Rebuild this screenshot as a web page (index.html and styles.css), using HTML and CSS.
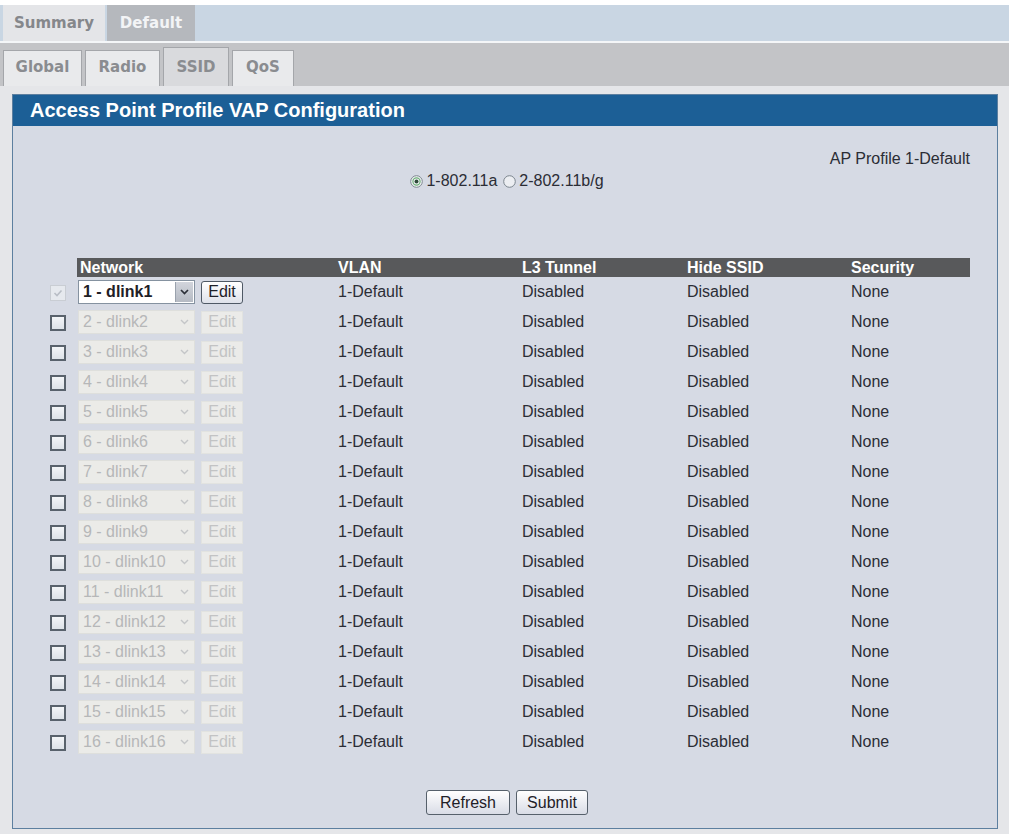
FILE: index.html
```html
<!DOCTYPE html>
<html lang="en">
<head>
    <meta charset="UTF-8">
    <meta name="viewport" content="width=device-width, initial-scale=1.0">
    <title>Access Point Profile VAP Configuration</title>
    <link rel="stylesheet" href="styles.css">
</head>
<body>
    <div class="tabs-top">
        <div class="tab tab-summary">Summary</div>
        <div class="tab tab-default">Default</div>
    </div>
    <div class="tabs-sub">
        <div class="subtab t-global">Global</div>
        <div class="subtab t-radio">Radio</div>
        <div class="subtab t-ssid active">SSID</div>
        <div class="subtab t-qos">QoS</div>
    </div>

    <div class="content">
        <div class="panel">
            <div class="panel-title">Access Point Profile VAP Configuration</div>
            <div class="panel-body">
                <div class="profile">AP Profile 1-Default</div>
                <div class="radios">
                    <label class="radio">
                        <svg width="13" height="13" viewBox="0 0 13 13"><circle cx="6.5" cy="6.5" r="5.8" fill="#f2f4f6" stroke="#7c858e"/><circle cx="6.5" cy="6.5" r="3.6" fill="none" stroke="#6fb07a" stroke-width="1.2"/><circle cx="6.5" cy="6.5" r="2" fill="#2f4a3a"/></svg>
                        1-802.11a
                    </label>
                    <label class="radio">
                        <svg width="13" height="13" viewBox="0 0 13 13"><circle cx="6.5" cy="6.5" r="5.8" fill="#eceef2" stroke="#7c858e"/></svg>
                        2-802.11b/g
                    </label>
                </div>

                <table class="vap">
                    <colgroup>
                        <col class="c-check">
                        <col class="c-net">
                        <col class="c-vlan">
                        <col class="c-l3">
                        <col class="c-hide">
                        <col>
                    </colgroup>
                    <thead>
                        <tr>
                            <th class="blank"></th>
                            <th>Network</th>
                            <th>VLAN</th>
                            <th>L3 Tunnel</th>
                            <th>Hide SSID</th>
                            <th>Security</th>
                        </tr>
                    </thead>
                    <tbody>
                        <tr>
                            <td><span class="check checked"><svg width="10" height="8" viewBox="0 0 10 8"><polyline points="1.5,4 4,6.5 8.5,1.5" fill="none" stroke="#b9bec6" stroke-width="1.6"/></svg></span></td>
                            <td class="net"><span class="select"><span class="select-text">1 - dlink1</span><span class="arrow"><svg width="9" height="6" viewBox="0 0 9 6"><polyline points="1,1 4.5,4.5 8,1" fill="none" stroke="#2c3038" stroke-width="1.7"/></svg></span></span><span class="edit">Edit</span></td>
                            <td>1-Default</td><td>Disabled</td><td>Disabled</td><td>None</td>
                        </tr>
                        <tr>
                            <td><span class="check"></span></td>
                            <td class="net"><span class="select off"><span class="select-text">2 - dlink2</span><span class="arrow"><svg width="9" height="6" viewBox="0 0 9 6"><polyline points="1,1 4.5,4.5 8,1" fill="none" stroke="#c4c6c8" stroke-width="1.4"/></svg></span></span><span class="edit off">Edit</span></td>
                            <td>1-Default</td><td>Disabled</td><td>Disabled</td><td>None</td>
                        </tr>
                        <tr>
                            <td><span class="check"></span></td>
                            <td class="net"><span class="select off"><span class="select-text">3 - dlink3</span><span class="arrow"><svg width="9" height="6" viewBox="0 0 9 6"><polyline points="1,1 4.5,4.5 8,1" fill="none" stroke="#c4c6c8" stroke-width="1.4"/></svg></span></span><span class="edit off">Edit</span></td>
                            <td>1-Default</td><td>Disabled</td><td>Disabled</td><td>None</td>
                        </tr>
                        <tr>
                            <td><span class="check"></span></td>
                            <td class="net"><span class="select off"><span class="select-text">4 - dlink4</span><span class="arrow"><svg width="9" height="6" viewBox="0 0 9 6"><polyline points="1,1 4.5,4.5 8,1" fill="none" stroke="#c4c6c8" stroke-width="1.4"/></svg></span></span><span class="edit off">Edit</span></td>
                            <td>1-Default</td><td>Disabled</td><td>Disabled</td><td>None</td>
                        </tr>
                        <tr>
                            <td><span class="check"></span></td>
                            <td class="net"><span class="select off"><span class="select-text">5 - dlink5</span><span class="arrow"><svg width="9" height="6" viewBox="0 0 9 6"><polyline points="1,1 4.5,4.5 8,1" fill="none" stroke="#c4c6c8" stroke-width="1.4"/></svg></span></span><span class="edit off">Edit</span></td>
                            <td>1-Default</td><td>Disabled</td><td>Disabled</td><td>None</td>
                        </tr>
                        <tr>
                            <td><span class="check"></span></td>
                            <td class="net"><span class="select off"><span class="select-text">6 - dlink6</span><span class="arrow"><svg width="9" height="6" viewBox="0 0 9 6"><polyline points="1,1 4.5,4.5 8,1" fill="none" stroke="#c4c6c8" stroke-width="1.4"/></svg></span></span><span class="edit off">Edit</span></td>
                            <td>1-Default</td><td>Disabled</td><td>Disabled</td><td>None</td>
                        </tr>
                        <tr>
                            <td><span class="check"></span></td>
                            <td class="net"><span class="select off"><span class="select-text">7 - dlink7</span><span class="arrow"><svg width="9" height="6" viewBox="0 0 9 6"><polyline points="1,1 4.5,4.5 8,1" fill="none" stroke="#c4c6c8" stroke-width="1.4"/></svg></span></span><span class="edit off">Edit</span></td>
                            <td>1-Default</td><td>Disabled</td><td>Disabled</td><td>None</td>
                        </tr>
                        <tr>
                            <td><span class="check"></span></td>
                            <td class="net"><span class="select off"><span class="select-text">8 - dlink8</span><span class="arrow"><svg width="9" height="6" viewBox="0 0 9 6"><polyline points="1,1 4.5,4.5 8,1" fill="none" stroke="#c4c6c8" stroke-width="1.4"/></svg></span></span><span class="edit off">Edit</span></td>
                            <td>1-Default</td><td>Disabled</td><td>Disabled</td><td>None</td>
                        </tr>
                        <tr>
                            <td><span class="check"></span></td>
                            <td class="net"><span class="select off"><span class="select-text">9 - dlink9</span><span class="arrow"><svg width="9" height="6" viewBox="0 0 9 6"><polyline points="1,1 4.5,4.5 8,1" fill="none" stroke="#c4c6c8" stroke-width="1.4"/></svg></span></span><span class="edit off">Edit</span></td>
                            <td>1-Default</td><td>Disabled</td><td>Disabled</td><td>None</td>
                        </tr>
                        <tr>
                            <td><span class="check"></span></td>
                            <td class="net"><span class="select off"><span class="select-text">10 - dlink10</span><span class="arrow"><svg width="9" height="6" viewBox="0 0 9 6"><polyline points="1,1 4.5,4.5 8,1" fill="none" stroke="#c4c6c8" stroke-width="1.4"/></svg></span></span><span class="edit off">Edit</span></td>
                            <td>1-Default</td><td>Disabled</td><td>Disabled</td><td>None</td>
                        </tr>
                        <tr>
                            <td><span class="check"></span></td>
                            <td class="net"><span class="select off"><span class="select-text">11 - dlink11</span><span class="arrow"><svg width="9" height="6" viewBox="0 0 9 6"><polyline points="1,1 4.5,4.5 8,1" fill="none" stroke="#c4c6c8" stroke-width="1.4"/></svg></span></span><span class="edit off">Edit</span></td>
                            <td>1-Default</td><td>Disabled</td><td>Disabled</td><td>None</td>
                        </tr>
                        <tr>
                            <td><span class="check"></span></td>
                            <td class="net"><span class="select off"><span class="select-text">12 - dlink12</span><span class="arrow"><svg width="9" height="6" viewBox="0 0 9 6"><polyline points="1,1 4.5,4.5 8,1" fill="none" stroke="#c4c6c8" stroke-width="1.4"/></svg></span></span><span class="edit off">Edit</span></td>
                            <td>1-Default</td><td>Disabled</td><td>Disabled</td><td>None</td>
                        </tr>
                        <tr>
                            <td><span class="check"></span></td>
                            <td class="net"><span class="select off"><span class="select-text">13 - dlink13</span><span class="arrow"><svg width="9" height="6" viewBox="0 0 9 6"><polyline points="1,1 4.5,4.5 8,1" fill="none" stroke="#c4c6c8" stroke-width="1.4"/></svg></span></span><span class="edit off">Edit</span></td>
                            <td>1-Default</td><td>Disabled</td><td>Disabled</td><td>None</td>
                        </tr>
                        <tr>
                            <td><span class="check"></span></td>
                            <td class="net"><span class="select off"><span class="select-text">14 - dlink14</span><span class="arrow"><svg width="9" height="6" viewBox="0 0 9 6"><polyline points="1,1 4.5,4.5 8,1" fill="none" stroke="#c4c6c8" stroke-width="1.4"/></svg></span></span><span class="edit off">Edit</span></td>
                            <td>1-Default</td><td>Disabled</td><td>Disabled</td><td>None</td>
                        </tr>
                        <tr>
                            <td><span class="check"></span></td>
                            <td class="net"><span class="select off"><span class="select-text">15 - dlink15</span><span class="arrow"><svg width="9" height="6" viewBox="0 0 9 6"><polyline points="1,1 4.5,4.5 8,1" fill="none" stroke="#c4c6c8" stroke-width="1.4"/></svg></span></span><span class="edit off">Edit</span></td>
                            <td>1-Default</td><td>Disabled</td><td>Disabled</td><td>None</td>
                        </tr>
                        <tr>
                            <td><span class="check"></span></td>
                            <td class="net"><span class="select off"><span class="select-text">16 - dlink16</span><span class="arrow"><svg width="9" height="6" viewBox="0 0 9 6"><polyline points="1,1 4.5,4.5 8,1" fill="none" stroke="#c4c6c8" stroke-width="1.4"/></svg></span></span><span class="edit off">Edit</span></td>
                            <td>1-Default</td><td>Disabled</td><td>Disabled</td><td>None</td>
                        </tr>
                    </tbody>
                </table>

                <div class="actions">
                    <button class="btn btn-refresh">Refresh</button>
                    <button class="btn btn-submit">Submit</button>
                </div>
            </div>
        </div>
    </div>
</body>
</html>
```

FILE: styles.css
```css
body {
    margin: 0;
    font-family: 'Liberation Sans', Arial, sans-serif;
    font-size: 16px;
    color: #2b2d35;
    background-color: #e5e6e9;
}

/* top level tabs */
.tabs-top {
    display: flex;
    height: 36px;
    padding-left: 3px;
    border-top: 5px solid #fff;
    border-bottom: 2px solid #f4f6f8;
    background-color: #c9d6e3;
}
.tab {
    font-family: 'DejaVu Sans', Verdana, sans-serif;
    font-weight: bold;
    font-size: 15px;
    line-height: 36px;
    text-align: center;
}
.tab-summary {
    width: 102px;
    color: #85878b;
    background-color: #e4e5e8;
}
.tab-default {
    width: 88px;
    margin-left: 2px;
    color: #f3f4f6;
    background-color: #b5b8bd;
}

/* second level tabs */
.tabs-sub {
    display: flex;
    align-items: flex-end;
    gap: 3px;
    height: 43px;
    padding-left: 3px;
    background-color: #c3c4c7;
}
.subtab {
    box-sizing: border-box;
    height: 36px;
    font-family: 'DejaVu Sans', Verdana, sans-serif;
    font-weight: bold;
    font-size: 15px;
    line-height: 33px;
    text-align: center;
    color: #8a8c90;
    background-color: #e9eaec;
    border: 1px solid #a4a6aa;
    border-bottom: none;
}
.t-global { width: 79px; }
.t-radio { width: 75px; }
.t-ssid { width: 66px; }
.t-qos { width: 62px; }
.subtab.active {
    height: 39px;
    line-height: 38px;
    background-color: #d9dadd;
}

/* panel */
.content {
    padding: 8px 11px 0 12px;
}
.panel {
    border: 1px solid #5d7f9f;
    background-color: #d6dae4;
}
.panel-title {
    height: 31px;
    padding-left: 17px;
    line-height: 31px;
    font-size: 20px;
    font-weight: bold;
    color: #fff;
    background-color: #1c5f96;
}
.panel-body {
    padding: 25px 27px 13px 31px;
}
.profile {
    text-align: right;
    line-height: 16px;
}
.radios {
    display: flex;
    justify-content: center;
    gap: 6px;
    margin-top: 6px;
    line-height: 16px;
}
.radio {
    display: flex;
    align-items: center;
    gap: 3px;
}

/* table */
.vap {
    width: 100%;
    margin-top: 69px;
    border-collapse: collapse;
    table-layout: fixed;
}
.c-check { width: 33px; }
.c-net { width: 256px; }
.c-vlan { width: 184px; }
.c-l3 { width: 165px; }
.c-hide { width: 164px; }
.vap th {
    height: 19px;
    padding: 0 5px;
    text-align: left;
    font-size: 16px;
    line-height: 19px;
    color: #fff;
    background-color: #58595b;
}
.vap th:nth-child(2) {
    padding-left: 3px;
}
.vap th.blank {
    background: none;
}
.vap td {
    height: 30px;
    padding: 0 5px;
    vertical-align: middle;
    white-space: nowrap;
}
.vap td:first-child {
    padding-left: 6px;
}
.vap td.net {
    padding-left: 1px;
}
.check {
    display: inline-flex;
    align-items: center;
    justify-content: center;
    width: 12px;
    height: 12px;
    vertical-align: middle;
    border: 2px solid #59626c;
    background: linear-gradient(#f3f5f8, #dde2e8);
}
.check.checked {
    border: 1px solid #c9cdd3;
    width: 14px;
    height: 14px;
    background: #e6e9ee;
}

.select {
    display: inline-flex;
    align-items: center;
    justify-content: space-between;
    box-sizing: border-box;
    width: 117px;
    height: 24px;
    vertical-align: middle;
    border: 1px solid #8592a0;
    background-color: #fff;
}
.select-text {
    padding-left: 4px;
    font-weight: bold;
    color: #1e2026;
}
.arrow {
    display: flex;
    align-items: center;
    justify-content: center;
    width: 17px;
    height: 20px;
    margin-right: 1px;
    background: linear-gradient(#d2d5dc, #b5bac3);
    border-left: 1px solid #9aa2ad;
}
.select.off {
    border-color: #dedfdc;
    background-color: #ebebe8;
}
.select.off .select-text {
    font-weight: normal;
    color: #b6b7b8;
}
.select.off .arrow {
    background: none;
    border-left: none;
}

.edit {
    display: inline-block;
    box-sizing: border-box;
    width: 42px;
    height: 23px;
    margin-left: 6px;
    vertical-align: middle;
    text-align: center;
    line-height: 20px;
    color: #1f2128;
    border: 1px solid #4f5965;
    border-radius: 3px;
    background: linear-gradient(#ffffff, #dfe2ea);
}
.edit.off {
    color: #c2c3c4;
    border-color: #e2e3e0;
    border-radius: 0;
    background: #ebebe9;
}

/* bottom buttons */
.actions {
    display: flex;
    justify-content: center;
    gap: 6px;
    margin-top: 33px;
}
.btn {
    height: 25px;
    padding: 0;
    font-family: 'Liberation Sans', Arial, sans-serif;
    font-size: 16px;
    color: #1f2128;
    border: 1px solid #56606b;
    border-radius: 3px;
    background: linear-gradient(#ffffff, #d9dce6);
}
.btn-refresh { width: 84px; }
.btn-submit { width: 72px; }
```
